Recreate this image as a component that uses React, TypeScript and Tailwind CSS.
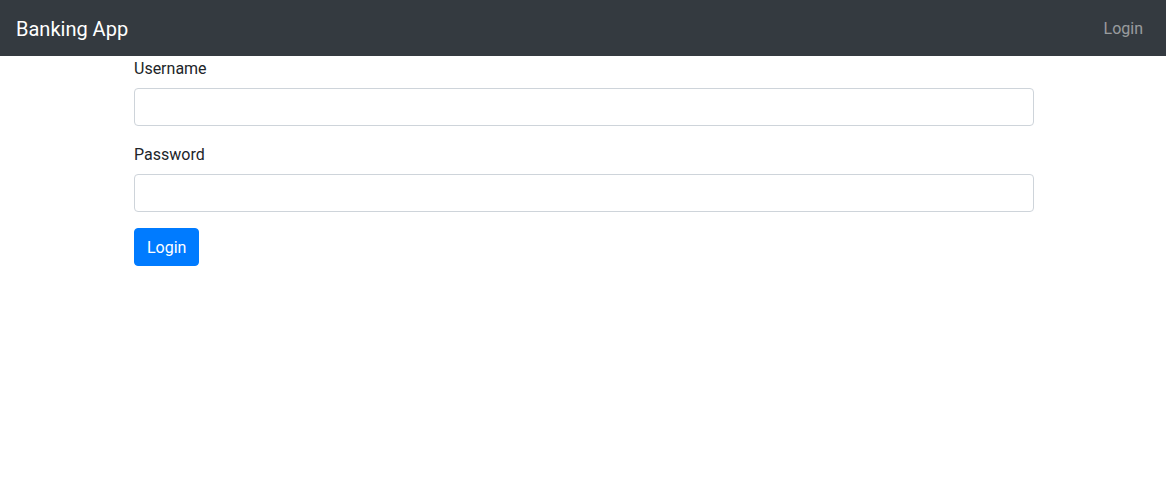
import React from "react";

export default function App() {
  return (
    <div className="min-h-[480px] bg-white text-[#212529]" style={{ fontFamily: "Roboto, 'Liberation Sans', sans-serif" }}>
      <nav className="flex h-[56px] items-center justify-between bg-[#343a40] px-4 py-2">
        <a className="pt-[7px] pb-[5px] text-[20px] leading-[30px] text-white">Banking App</a>
        <a className="pl-2 pr-[7px] pt-[10px] pb-2 text-[16px] leading-6 text-white/50">Login</a>
      </nav>
      <div className="ml-[134px] w-[900px]">
        <form className="flex flex-col">
          <div className="mb-4 flex flex-col">
            <label className="mb-[7px] pt-px text-[16px] leading-6">Username</label>
            <input type="text" className="h-[38px] rounded-[4px] border border-[#ced4da] bg-white px-3 text-[16px] outline-none" />
          </div>
          <div className="mb-4 flex flex-col">
            <label className="mb-[7px] pt-px text-[16px] leading-6">Password</label>
            <input type="password" className="h-[38px] rounded-[4px] border border-[#ced4da] bg-white px-3 text-[16px] outline-none" />
          </div>
          <div>
            <button type="button" className="h-[38px] rounded-[4px] border border-[#007bff] bg-[#007bff] px-3 pt-px text-[16px] leading-6 text-white">Login</button>
          </div>
        </form>
      </div>
    </div>
  );
}
